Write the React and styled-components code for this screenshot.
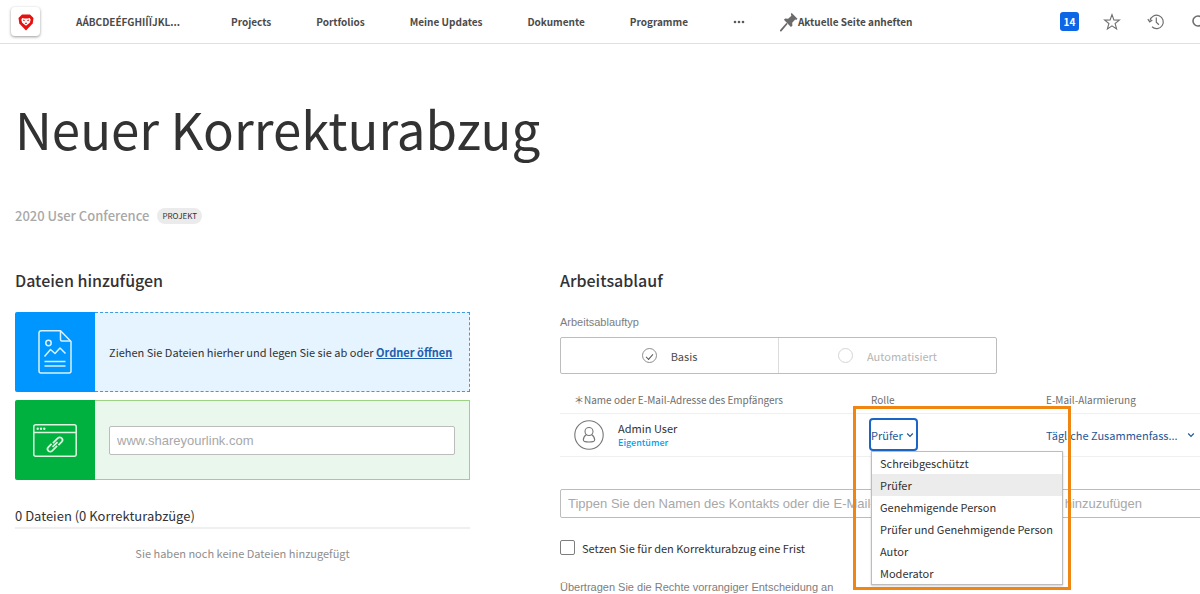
import React, { useState } from "react";
import styled, { createGlobalStyle } from "styled-components";

const GlobalStyle = createGlobalStyle`
  * {
    box-sizing: border-box;
  }
  body {
    margin: 0;
    background: #fff;
    color: #323232;
    font-family: "Noto Sans CJK SC", "Noto Sans", sans-serif;
    font-size: 11px;
    line-height: 16px;
    overflow: hidden;
  }
  button, select {
    font-family: inherit;
  }
`;

const arial = `"Liberation Sans", Arial, sans-serif`;

const Header = styled.header`
  display: flex;
  align-items: center;
  height: 44px;
  padding-left: 11px;
  border-bottom: 1px solid #e1e1e1;
  overflow: hidden;
`;

const Logo = styled.a`
  display: flex;
  align-items: center;
  justify-content: center;
  flex: none;
  width: 29px;
  height: 29px;
  margin-right: 36px;
  border-radius: 4px;
  background: #fff;
  box-shadow: 0 1px 3px rgba(0, 0, 0, 0.4);
`;

const Nav = styled.nav`
  display: flex;
  align-items: center;
  gap: 45px;
`;

const NavLink = styled.a`
  min-width: ${({ width }) => (width ? width : "auto")};
  color: #4b4b4b;
  font-size: 10px;
  font-weight: bold;
  text-decoration: none;
  white-space: nowrap;
`;

const IconButton = styled.button`
  display: flex;
  align-items: center;
  justify-content: center;
  flex: none;
  width: ${({ width }) => (width ? width : "22px")};
  height: 22px;
  padding: 0;
  border: 0;
  background: none;
  color: #6e6e6e;
`;

const PinButton = styled.button`
  display: flex;
  align-items: center;
  margin-left: 35px;
  padding: 0;
  border: 0;
  background: none;
  color: #4b4b4b;
  font-size: 10px;
  font-weight: bold;
  line-height: 16px;
  white-space: nowrap;
`;

const Tools = styled.div`
  display: flex;
  align-items: center;
  gap: 22px;
  margin: 0 -11px 0 auto;
`;

const Count = styled.button`
  width: 19px;
  height: 19px;
  padding: 0;
  border: 0;
  border-radius: 3px;
  background: #0d66e5;
  color: #fff;
  font-size: 10px;
  font-weight: bold;
  line-height: 18px;
`;

const Page = styled.main`
  padding: 50px 0 0 15px;
`;

const Title = styled.h1`
  margin: 0;
  font-size: 51px;
  font-weight: normal;
  line-height: 68px;
  white-space: nowrap;
`;

const Crumb = styled.div`
  display: flex;
  align-items: center;
  gap: 8px;
  margin-top: 44px;
`;

const CrumbLink = styled.a`
  color: #a8a8a8;
  font-size: 13px;
  font-weight: 500;
  line-height: 20px;
  text-decoration: none;
`;

const Tag = styled.span`
  padding: 0 5px;
  border-radius: 8px;
  background: #ebebeb;
  font-size: 8px;
  line-height: 16px;
`;

const Columns = styled.div`
  display: grid;
  grid-template-columns: minmax(320px, 455px) minmax(0, 1fr);
  gap: 90px;
  margin-top: 42px;
`;

const SectionTitle = styled.h2`
  margin: 0 0 20px;
  font-size: 16px;
  font-weight: 500;
  line-height: 24px;
`;

const DropBox = styled.div`
  display: flex;
  height: 80px;
  margin-bottom: 8px;
`;

const BoxIcon = styled.div`
  display: flex;
  align-items: center;
  justify-content: center;
  flex: none;
  width: 80px;
  border-radius: 2px 0 0 2px;
  background: ${({ color }) => color};
`;

const BoxBody = styled.div`
  display: flex;
  align-items: center;
  flex: 1;
  min-width: 0;
  padding: 0 14px;
  border: ${({ border }) => border};
  border-left: 0;
  background: ${({ background }) => background};
  white-space: nowrap;
`;

const FolderLink = styled.a`
  color: #1f5fae;
  font-weight: bold;
`;

const TextInput = styled.input`
  width: 100%;
  height: 29px;
  padding: 0 7px;
  border: 1px solid #bcbcbc;
  border-radius: 2px;
  background: #fff;
  font-family: ${arial};
  font-size: 13px;
  &::placeholder {
    color: #a8a8a8;
    opacity: 1;
  }
`;

const FileCount = styled.div`
  margin-top: 27px;
  padding-bottom: 2px;
  border-bottom: 2px solid #efefef;
  font-size: 13px;
  line-height: 18px;
`;

const EmptyText = styled.p`
  margin: 16px 0 0;
  color: #8e8e8e;
  text-align: center;
`;

const FieldLabel = styled.div`
  margin: ${({ margin }) => (margin ? margin : "0px")};
  color: #7d7d7d;
  font-family: ${arial};
  font-size: 11px;
`;

const TypeSwitch = styled.div`
  display: flex;
  width: 437px;
  max-width: 100%;
  height: 37px;
  margin-top: 7px;
  border: 1px solid #bdbdbd;
  border-radius: 2px;
`;

const TypeOption = styled.label`
  display: flex;
  align-items: center;
  justify-content: center;
  flex: 1;
  gap: 14px;
  color: ${({ $muted }) => ($muted ? "#b5b5b5" : "#4b4b4b")};
  & + & {
    border-left: 1px solid #dcdcdc;
  }
`;

const Radio = styled.input`
  display: grid;
  place-items: center;
  appearance: none;
  width: 15px;
  height: 15px;
  margin: 0;
  border: 1px solid #d5d5d5;
  border-radius: 50%;
  &:checked {
    border-color: #8e8e8e;
  }
  &:checked::before {
    content: "";
    width: 6px;
    height: 3px;
    border: solid #555;
    border-width: 0 0 1px 1px;
    transform: rotate(-48deg);
  }
`;

const Table = styled.table`
  width: 100%;
  margin-top: 17px;
  border-collapse: collapse;
  table-layout: fixed;
`;

const Th = styled.th`
  width: ${({ width }) => (width ? width : "auto")};
  height: 22px;
  padding: ${({ padding }) => (padding ? padding : "0px")};
  color: #6e6e6e;
  font-size: 10px;
  font-weight: normal;
  line-height: 18px;
  text-align: left;
  vertical-align: top;
  white-space: nowrap;
`;

const Td = styled.td`
  height: 43px;
  padding: ${({ padding }) => (padding ? padding : "0px")};
  border-top: 1px solid #efefef;
  border-bottom: 1px solid #efefef;
`;

const Person = styled.div`
  display: flex;
  align-items: center;
  gap: 14px;
`;

const Name = styled.div`
  line-height: 16px;
`;

const Owner = styled.div`
  color: #00a0f0;
  font-size: 9px;
  font-weight: 500;
  line-height: 14px;
`;

const RoleCell = styled.div`
  position: relative;
  display: flex;
`;

const RoleButton = styled.button`
  display: flex;
  align-items: center;
  gap: 3px;
  height: 33px;
  margin-left: -2px;
  padding: 0 2px 0 0;
  border: 2px solid #1b66c4;
  border-radius: 4px;
  background: #fff;
  color: #1f5796;
  font-size: 11px;
  white-space: nowrap;
`;

const RoleMenu = styled.ul`
  position: absolute;
  top: 33px;
  left: 0;
  z-index: 1;
  width: 192px;
  margin: 0;
  padding: 0;
  border: 1px solid #bdbdbd;
  background: #fff;
  box-shadow: 0 1px 2px rgba(0, 0, 0, 0.2);
  list-style: none;
`;

const RoleOption = styled.li`
  padding: 0 8px;
  background: ${({ $active }) => ($active ? "#ececec" : "#fff")};
  line-height: 22px;
  white-space: nowrap;
`;

const Highlight = styled.div`
  position: absolute;
  top: -12px;
  left: -18px;
  z-index: 2;
  width: 218px;
  height: 184px;
  border: 3px solid #f18512;
  pointer-events: none;
`;

const MailPicker = styled.div`
  display: flex;
  align-items: center;
  padding-right: 5px;
  color: #1f5796;
`;

const MailSelect = styled.select`
  appearance: none;
  flex: 1;
  min-width: 0;
  padding: 0;
  border: 0;
  background: none;
  color: inherit;
  font-size: 11px;
`;

const ContactField = styled.div`
  margin: 32px -8px 0 0;
`;

const Deadline = styled.label`
  display: flex;
  align-items: center;
  gap: 7px;
  margin-top: 22px;
`;

const Checkbox = styled.input`
  appearance: none;
  width: 15px;
  height: 15px;
  margin: 0;
  border: 1px solid #7d7d7d;
  border-radius: 2px;
`;

const LionIcon = () => (
  <svg width="18" height="18" viewBox="0 0 18 18">
    <path d="M5 1.5h8l3.5 3.5-.8 5.500L9 17.4 2.3 10.500 1.5 5z" fill="#e6100f" />
    <path d="M5.2 5l2 .5h3.600l2-.5.9 1.800-.9 3L9 12.800 5.200 9.800l-.9-3z" fill="#fff" />
    <path d="M6 7l1.700.7M12 7l-1.700.7M8.500 10h1L9 10.800z" stroke="#e6100f" strokeWidth="1" fill="#e6100f" />
  </svg>
);

const PinIcon = () => (
  <svg width="18" height="20" viewBox="0 0 18 20">
    <path d="M11.500.8l6 6-1.300 1.200-1-.4-3 3.200.2 3-1.500 1.200-7-7.200 1.300-1.300 2.900.3 3.300-3-.5-1.400z" fill="#6b6b6b" />
    <path d="M6.500 12L.8 18.600" stroke="#6b6b6b" strokeWidth="1.800" strokeLinecap="round" />
  </svg>
);

const MoreIcon = () => (
  <svg width="12" height="4" viewBox="0 0 12 4" fill="#5a5a5a">
    <circle cx="2" cy="2" r="1.300" />
    <circle cx="6" cy="2" r="1.300" />
    <circle cx="10" cy="2" r="1.300" />
  </svg>
);

const StarIcon = () => (
  <svg width="18" height="18" viewBox="0 0 18 18" fill="none" stroke="currentColor" strokeWidth="1.100">
    <path d="M9 1.600l1.900 5.300 5.500.2-4.300 3.400 1.500 5.400L9 12.800l-4.600 3.100 1.500-5.400L1.600 7.100l5.500-.2z" />
  </svg>
);

const HistoryIcon = () => (
  <svg width="18" height="18" viewBox="0 0 18 18" fill="none" stroke="currentColor" strokeWidth="1.200">
    <path d="M3 7.500A6.700 6.700 0 1 1 5 13.800" />
    <path d="M.8 6.200l1.900 2.600 2.600-1.900M9.300 4.500v4.700l2.600 2.500" />
  </svg>
);

const SearchIcon = () => (
  <svg width="18" height="18" viewBox="0 0 18 18" fill="none" stroke="currentColor" strokeWidth="1.600">
    <circle cx="7" cy="8" r="5" />
    <path d="M11 12l5 5" />
  </svg>
);

const FileIcon = () => (
  <svg width="34" height="44" viewBox="0 0 34 44" fill="none" stroke="#d9f1ff" strokeWidth="1.500" strokeLinejoin="round">
    <path d="M3 .8h19.500L33 11.500V41a2 2 0 0 1-2 2H3a2 2 0 0 1-2-2V2.800a2 2 0 0 1 2-2z" />
    <path d="M22.500 1v8.500a1.500 1.500 0 0 0 1.500 1.500h8.500" />
    <circle cx="10.500" cy="13" r="2.700" />
    <path d="M6.500 26.500l6-7 4.500 4 5-5.500 5.500 5.500M6.500 31.500h21M6.500 36h21" />
  </svg>
);

const LinkIcon = () => (
  <svg width="44" height="33" viewBox="0 0 44 33" fill="none" stroke="#dcf5df" strokeWidth="1.500">
    <rect x=".8" y=".8" width="42.400" height="31.400" rx="2" />
    <path d="M1 8.500h42" />
    <g fill="#dcf5df" stroke="none">
      <circle cx="4.700" cy="4.700" r="1.200" />
      <circle cx="8" cy="4.700" r="1.200" />
      <circle cx="11.300" cy="4.700" r="1.200" />
    </g>
    <g transform="translate(22 20.500) rotate(-45)" strokeWidth="1.700">
      <path d="M1.500 2.500H-5.500a2.700 2.700 0 0 1 0-5.400H-1" transform="translate(-1 0)" />
      <path d="M-1.500-2.500H5.500a2.700 2.700 0 0 1 0 5.400H1" transform="translate(1 0)" />
      <path d="M-3.500 0h7" />
    </g>
  </svg>
);

const UserIcon = () => (
  <svg width="30" height="30" viewBox="0 0 30 30" fill="none" stroke="#767676" strokeWidth="1.100">
    <circle cx="15" cy="15" r="14.200" />
    <circle cx="15" cy="11.500" r="4" />
    <path d="M12.300 14.800c-2 1.200-3 3-3 5.200 0 1.300 2.500 2 5.700 2s5.700-.7 5.700-2c0-2.200-1-4-3-5.200" />
  </svg>
);

const Chevron = () => (
  <svg width="8" height="6" viewBox="0 0 8 6" fill="none" stroke="currentColor" strokeWidth="1.200">
    <path d="M1.200 1.500L4 4.300l2.800-2.800" />
  </svg>
);

const navItems = ["Projects", "Portfolios", "Meine Updates", "Dokumente", "Programme"];

const roles = [
  "Schreibgeschützt",
  "Prüfer",
  "Genehmigende Person",
  "Prüfer und Genehmigende Person",
  "Autor",
  "Moderator",
];

const App = () => {
  const [role, setRole] = useState("Prüfer");
  const [open, setOpen] = useState(true);

  const pickRole = (item) => {
    setRole(item);
    setOpen(false);
  };

  return (
    <>
      <GlobalStyle />
      <Header>
        <Logo href="#" aria-label="Home">
          <LionIcon />
        </Logo>
        <Nav>
          <NavLink href="#" width="110px">AÁBCDEÉFGHIÍÏJKL...</NavLink>
          {navItems.map((item) => (
            <NavLink href="#" key={item}>{item}</NavLink>
          ))}
          <IconButton width="12px" aria-label="Mehr">
            <MoreIcon />
          </IconButton>
        </Nav>
        <PinButton>
          <PinIcon />
          Aktuelle Seite anheften
        </PinButton>
        <Tools>
          <Count>14</Count>
          <IconButton aria-label="Favoriten"><StarIcon /></IconButton>
          <IconButton aria-label="Verlauf"><HistoryIcon /></IconButton>
          <IconButton aria-label="Suche"><SearchIcon /></IconButton>
        </Tools>
      </Header>

      <Page>
        <Title>Neuer Korrekturabzug</Title>
        <Crumb>
          <CrumbLink href="#">2020 User Conference</CrumbLink>
          <Tag>PROJEKT</Tag>
        </Crumb>

        <Columns>
          <section>
            <SectionTitle>Dateien hinzufügen</SectionTitle>
            <DropBox>
              <BoxIcon color="#0096ff">
                <FileIcon />
              </BoxIcon>
              <BoxBody border="1px dashed #3d9be0" background="#e5f4ff">
                <span>
                  Ziehen Sie Dateien hierher und legen Sie sie ab oder{" "}
                  <FolderLink href="#">Ordner öffnen</FolderLink>
                </span>
              </BoxBody>
            </DropBox>
            <DropBox>
              <BoxIcon color="#00b140">
                <LinkIcon />
              </BoxIcon>
              <BoxBody border="1px solid #9bd284" background="#e9f7ed">
                <TextInput aria-label="Link" placeholder="www.shareyourlink.com" />
              </BoxBody>
            </DropBox>
            <FileCount>0 Dateien (0 Korrekturabzüge)</FileCount>
            <EmptyText>Sie haben noch keine Dateien hinzugefügt</EmptyText>
          </section>

          <section>
            <SectionTitle>Arbeitsablauf</SectionTitle>
            <FieldLabel margin="22px 0 0">Arbeitsablauftyp</FieldLabel>
            <TypeSwitch>
              <TypeOption>
                <Radio type="radio" name="type" defaultChecked />
                Basis
              </TypeOption>
              <TypeOption $muted>
                <Radio type="radio" name="type" />
                Automatisiert
              </TypeOption>
            </TypeSwitch>

            <Table>
              <thead>
                <tr>
                  <Th width="311px" padding="0 0 0 14px">＊Name oder E-Mail-Adresse des Empfängers</Th>
                  <Th width="175px">Rolle</Th>
                  <Th>E-Mail-Alarmierung</Th>
                </tr>
              </thead>
              <tbody>
                <tr>
                  <Td padding="0 0 0 14px">
                    <Person>
                      <UserIcon />
                      <div>
                        <Name>Admin User</Name>
                        <Owner>Eigentümer</Owner>
                      </div>
                    </Person>
                  </Td>
                  <Td>
                    <RoleCell>
                      <RoleButton aria-haspopup="listbox" aria-expanded={open} onClick={() => setOpen(!open)}>
                        {role}
                        <Chevron />
                      </RoleButton>
                      {open && (
                        <RoleMenu role="listbox" aria-label="Rolle">
                          {roles.map((item) => (
                            <RoleOption
                              key={item}
                              role="option"
                              aria-selected={item === role}
                              $active={item === role}
                              onClick={() => pickRole(item)}
                            >
                              {item}
                            </RoleOption>
                          ))}
                        </RoleMenu>
                      )}
                      <Highlight />
                    </RoleCell>
                  </Td>
                  <Td>
                    <MailPicker>
                      <MailSelect aria-label="E-Mail-Alarmierung">
                        <option>Tägliche Zusammenfass...</option>
                      </MailSelect>
                      <Chevron />
                    </MailPicker>
                  </Td>
                </tr>
              </tbody>
            </Table>

            <ContactField>
              <TextInput
                aria-label="Kontakt"
                placeholder="Tippen Sie den Namen des Kontakts oder die E-Mail-Adresse ein, um den Empfänger hinzuzufügen"
              />
            </ContactField>
            <Deadline>
              <Checkbox type="checkbox" />
              Setzen Sie für den Korrekturabzug eine Frist
            </Deadline>
            <FieldLabel margin="23px 0 0">Übertragen Sie die Rechte vorrangiger Entscheidung an</FieldLabel>
          </section>
        </Columns>
      </Page>
    </>
  );
};

export default App;
